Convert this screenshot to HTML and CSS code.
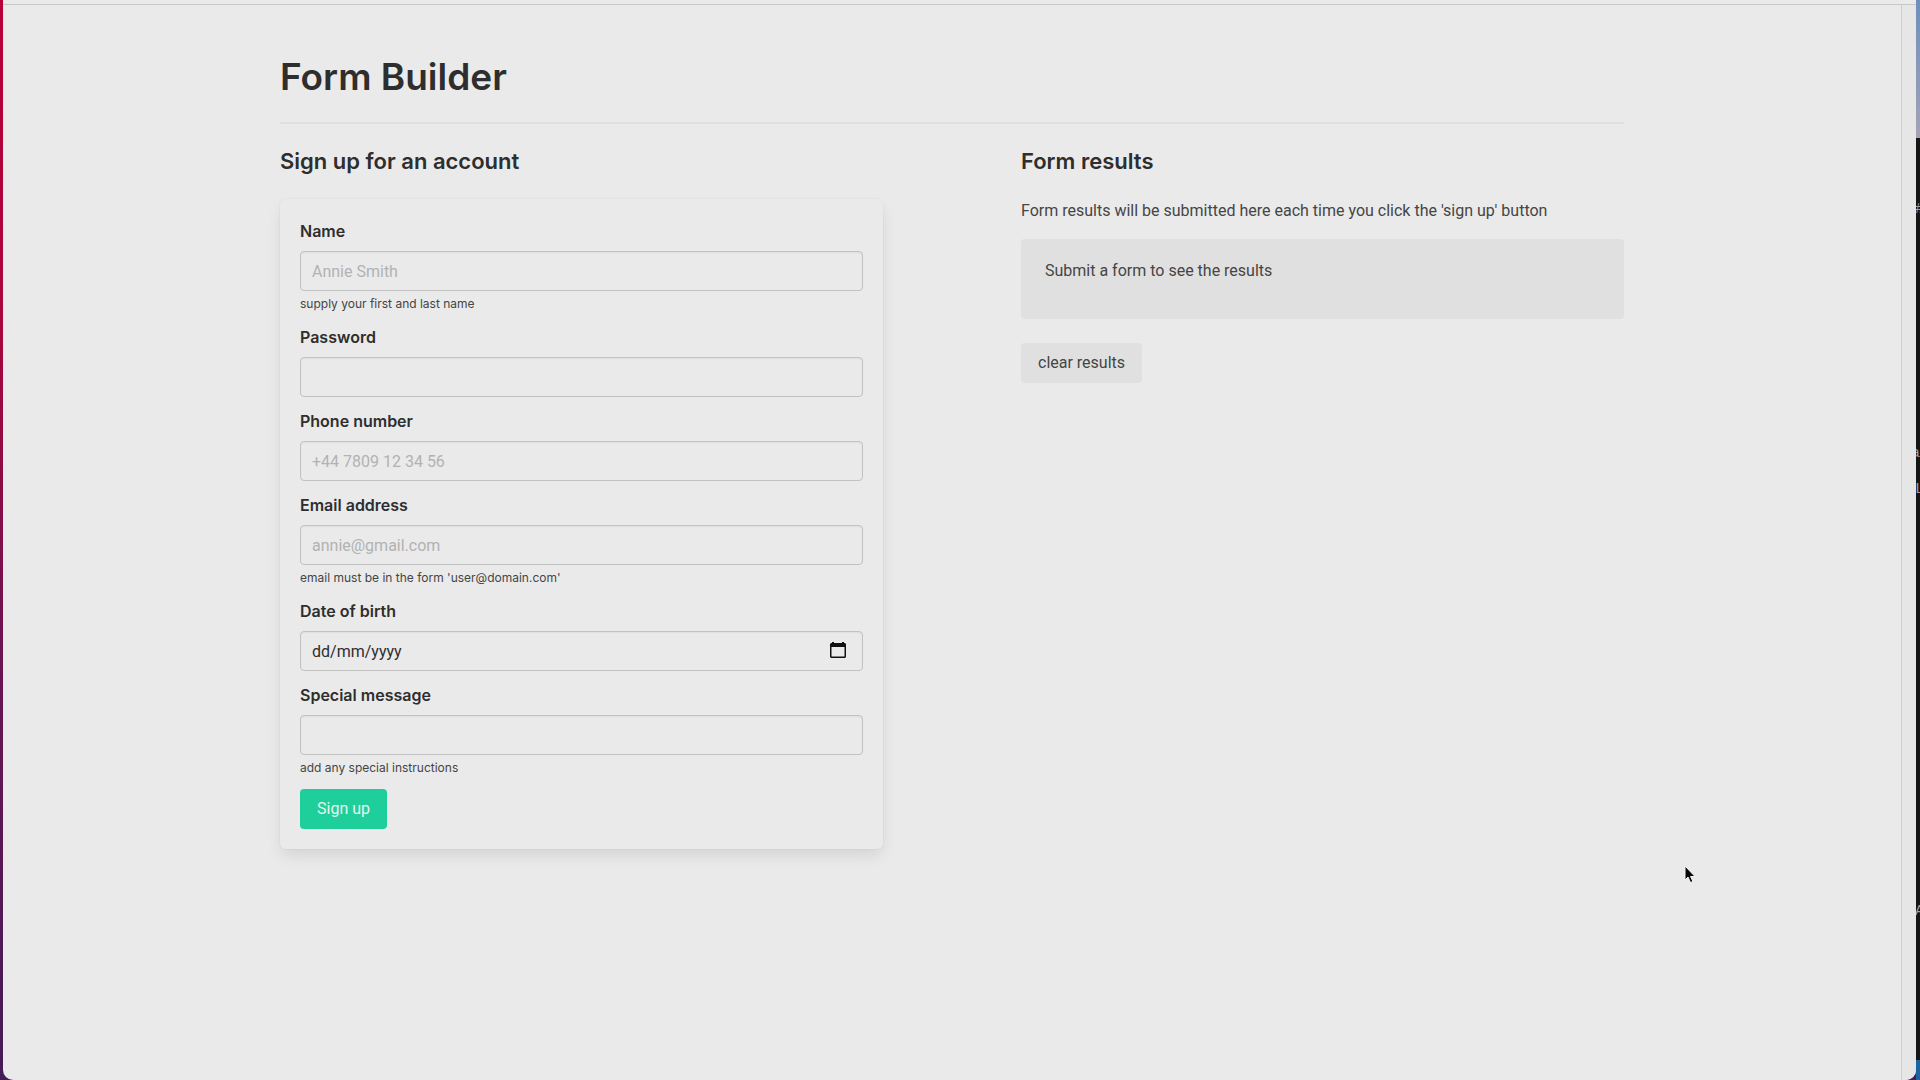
FILE: index.html
```
<!DOCTYPE html>
<html lang="en-GB">
<head>
<meta charset="utf-8">
<meta name="viewport" content="width=device-width, initial-scale=1">
<title>Form Builder</title>
<link rel="stylesheet" href="styles.css">
</head>
<body class="desktop">
<div class="window">
  <div class="toolbar-edge"></div>
  <div class="viewport">
    <main class="section">
      <div class="container">
        <h1 class="title">Form Builder</h1>
        <hr class="divider">
        <div class="columns">
          <section>
            <h2 class="subtitle">Sign up for an account</h2>
            <form class="box">
              <div class="field">
                <label class="label" for="name">Name</label>
                <input class="input" id="name" type="text" placeholder="Annie Smith">
                <p class="help">supply your first and last name</p>
              </div>
              <div class="field">
                <label class="label" for="password">Password</label>
                <input class="input" id="password" type="password">
              </div>
              <div class="field">
                <label class="label" for="phone">Phone number</label>
                <input class="input" id="phone" type="tel" placeholder="+44 7809 12 34 56">
              </div>
              <div class="field">
                <label class="label" for="email">Email address</label>
                <input class="input" id="email" type="email" placeholder="annie@gmail.com">
                <p class="help">email must be in the form 'user@domain.com'</p>
              </div>
              <div class="field">
                <label class="label" for="dob">Date of birth</label>
                <div class="date-control">
                  <input class="input date-input" id="dob" type="text" placeholder="dd/mm/yyyy">
                  <button class="date-button" type="button" aria-label="Open calendar">
                    <svg width="16" height="18" viewBox="0 0 16 18"><path fill="#111" fill-rule="evenodd" d="M2 1h2v1h8V1h2v1h1l1 1v13l-1 1H1l-1-1V3l1-1h1zM1.500 6v9.500h13V6z"/></svg>
                  </button>
                </div>
              </div>
              <div class="field">
                <label class="label" for="message">Special message</label>
                <input class="input" id="message" type="text">
                <p class="help">add any special instructions</p>
              </div>
              <button class="button primary" type="button">Sign up</button>
            </form>
          </section>
          <section>
            <h2 class="subtitle">Form results</h2>
            <p class="intro">Form results will be submitted here each time you click the 'sign up' button</p>
            <div class="results"><p>Submit a form to see the results</p></div>
            <button class="button" type="button">clear results</button>
          </section>
        </div>
      </div>
    </main>
    <div class="scrollbar"></div>
  </div>
</div>
<div class="behind" aria-hidden="true">
  <span class="glyph glyph-hash">#</span>
  <span class="glyph glyph-a">a</span>
  <span class="glyph glyph-l">L</span>
  <span class="glyph glyph-caret">A</span>
</div>
<svg class="pointer" width="14" height="20" viewBox="0 0 14 20" aria-hidden="true"><path d="M1 1v14l3-3 2.500 5.500 2.500-1-2.500-5H11z" fill="#080808" stroke="#f4f4f4" stroke-width="1"/></svg>
</body>
</html>
```
FILE: styles.css
```
* {
  box-sizing: border-box;
  margin: 0;
}

.desktop {
  display: flex;
  min-height: 100vh;
  position: relative;
  font: 16px/24px Roboto, "Liberation Sans", sans-serif;
  color: #454545;
  background: linear-gradient(#b80039, #a8063c 30%, #6c1450 60%, #431c58);
}

.window {
  flex: 1;
  display: flex;
  flex-direction: column;
  margin-left: 3px;
  background: #eaeaea;
  border-radius: 0 0 0 10px;
}

.toolbar-edge {
  height: 5px;
  border-bottom: 1px solid #c8c8cb;
}

.viewport {
  flex: 1;
  display: flex;
}

.section {
  flex: 1;
  padding: 48px 24px;
}

.container {
  max-width: 1344px;
  margin: 0 auto;
}

.title,
.subtitle,
.label,
.help {
  font-family: Inter, "Liberation Sans", sans-serif;
}

.title,
.subtitle,
.label {
  color: #2e2e2e;
  font-weight: 600;
}

.title {
  padding-top: 3px;
  font-size: 37px;
  line-height: 42px;
}

.divider {
  height: 2px;
  margin: 24px 0;
  border: 0;
  background: #dfdfdf;
}

.columns {
  display: grid;
  grid-template-columns: 1fr 1fr;
  gap: 138px;
}

.subtitle {
  margin-bottom: 24px;
  font-size: 22px;
  line-height: 27px;
}

.box {
  padding: 20px;
  border-radius: 6px;
  box-shadow: 0 8px 16px -2px rgba(10, 10, 10, 0.1), 0 0 0 1px rgba(10, 10, 10, 0.02);
}

.field {
  margin-bottom: 12px;
}

.label {
  display: block;
  margin-bottom: 8px;
}

.input {
  display: block;
  width: 100%;
  height: 40px;
  padding: 0 11px;
  border: 1px solid #c2c2c2;
  border-radius: 4px;
  background: #eaeaea;
  box-shadow: inset 0 1px 2px rgba(10, 10, 10, 0.05);
  color: #2e2e2e;
  font: inherit;
}

.input::placeholder {
  color: #b2b2b2;
}

.date-input::placeholder {
  color: #2e2e2e;
}

.date-control {
  position: relative;
}

.date-button {
  position: absolute;
  top: 0;
  right: 13px;
  display: flex;
  align-items: center;
  height: 38px;
  padding: 0 4px;
  border: 0;
  background: none;
}

.help {
  margin-top: 4px;
  font-size: 12px;
  line-height: 18px;
}

.intro {
  margin-bottom: 16px;
}

.results {
  min-height: 80px;
  margin-bottom: 24px;
  padding: 20px 24px;
  border-radius: 4px;
  background: #e0e0e0;
}

.button {
  display: block;
  height: 40px;
  padding: 0 17px;
  border: 0;
  border-radius: 4px;
  background: #e0e0e0;
  color: #454545;
  font: inherit;
}

.primary {
  background: #1fcf9b;
  color: #e5f5ef;
}

.scrollbar {
  width: 15px;
  border-left: 1px solid #cfcfcf;
  background: #e6e6e6;
}

.window,
.scrollbar {
  border-bottom-right-radius: 10px;
}

.behind {
  position: relative;
  width: 4px;
  overflow: hidden;
  background: linear-gradient(#6d8fbd, #a3a3b5 138px, #151515 138px, #151515 calc(100% - 20px), #1d63a0 calc(100% - 20px));
}

.glyph {
  position: absolute;
  left: -1px;
  font: 15px/20px "Liberation Mono", monospace;
  color: #a0a0a0;
}

.glyph-hash {
  top: 200px;
}

.glyph-a {
  top: 444px;
  left: -5px;
}

.glyph-l {
  top: 480px;
}

.glyph-caret {
  top: 902px;
}

.pointer {
  position: absolute;
  top: 865px;
  left: 1684px;
}
```
